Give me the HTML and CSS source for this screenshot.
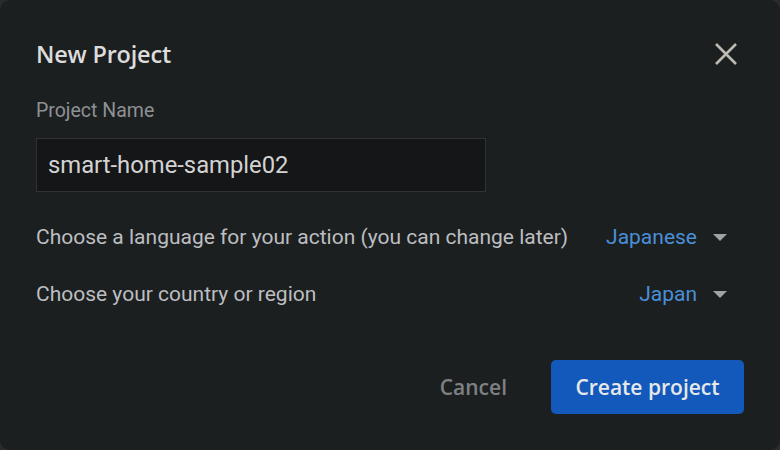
FILE: index.html
```html
<!DOCTYPE html>
<html>
<head>
<meta charset="utf-8">
<link rel="stylesheet" href="styles.css">
</head>
<body>
<div class="dialog">
  <div class="header">
    <h1 class="title">New Project</h1>
    <button class="close" aria-label="Close">
      <svg width="24" height="24" viewBox="0 0 24 24"><path d="M2 2 L22 22 M22 2 L2 22" stroke="#bdbab3" stroke-width="2.6" fill="none"/></svg>
    </button>
  </div>
  <div class="label">Project Name</div>
  <div class="input">smart-home-sample02</div>
  <div class="row">
    <span class="row-label">Choose a language for your action (you can change later)</span>
    <span class="select">Japanese<span class="caret"></span></span>
  </div>
  <div class="row row2">
    <span class="row-label">Choose your country or region</span>
    <span class="select">Japan<span class="caret"></span></span>
  </div>
  <div class="actions">
    <button class="cancel">Cancel</button>
    <button class="primary">Create project</button>
  </div>
</div>
</body>
</html>
```
FILE: styles.css
```css
html, body {
  margin: 0;
  padding: 0;
  background: #2a2b2d;
  width: 780px;
  height: 450px;
  overflow: hidden;
}
.dialog {
  box-sizing: border-box;
  width: 780px;
  height: 450px;
  background: #1c1f20;
  border-radius: 10px;
  padding: 36px 36px 0 36px;
  font-family: Roboto, "Liberation Sans", sans-serif;
  color: #bfc1c2;
}
.header {
  display: flex;
  justify-content: space-between;
  align-items: center;
  height: 36px;
}
.title {
  margin: 0;
  font-family: "Open Sans", Roboto, sans-serif;
  font-weight: 600;
  font-size: 23.5px;
  color: #dcdcdc;
  letter-spacing: -0.2px;
}
.close {
  background: none;
  border: 0;
  padding: 0;
  margin-right: 6px;
  width: 24px;
  height: 24px;
  display: flex;
}
.label {
  margin-top: 28px;
  font-size: 19.5px;
  color: #8e9194;
  line-height: 22px;
}
.input {
  box-sizing: border-box;
  margin-top: 16px;
  width: 450px;
  height: 54px;
  border: 1px solid #303335;
  background: #151617;
  padding: 0 11px;
  display: flex;
  align-items: center;
  font-size: 23.8px;
  color: #d3d3d3;
}
.row {
  display: flex;
  align-items: center;
  justify-content: space-between;
  margin-top: 31px;
  height: 28px;
  font-size: 21px;
  color: #bcbec0;
  padding-right: 17px;
}
.row2 {
  margin-top: 29px;
}
.select {
  display: flex;
  align-items: center;
  color: #4a8fd8;
}
.caret {
  width: 0;
  height: 0;
  border-left: 7px solid transparent;
  border-right: 7px solid transparent;
  border-top: 7px solid #a0a2a4;
  margin-left: 16px;
}
.actions {
  display: flex;
  justify-content: flex-end;
  align-items: center;
  margin-top: 52px;
}
.cancel {
  background: none;
  border: 0;
  font-family: "Open Sans", Roboto, sans-serif;
  font-weight: 600;
  font-size: 21px;
  color: #7e8183;
  padding: 0;
  margin-right: 44px;
}
.primary {
  width: 193px;
  height: 54px;
  background: #1259bb;
  border: 0;
  border-radius: 5px;
  color: #e6e8ea;
  font-family: "Open Sans", Roboto, sans-serif;
  font-weight: 600;
  font-size: 21px;
  margin-right: 0;
  padding: 0;
}
```
